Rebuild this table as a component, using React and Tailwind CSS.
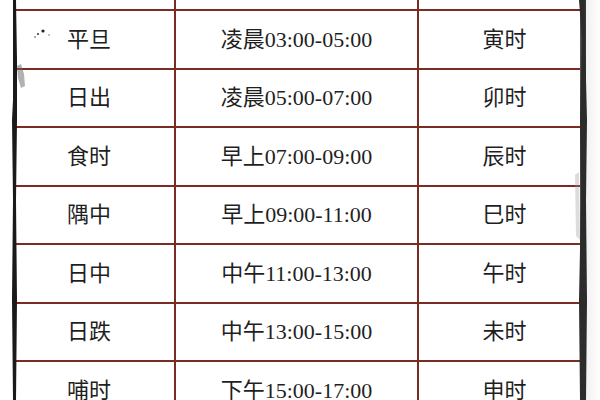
const ROWS = [
  ['平旦', '凌晨03:00-05:00', '寅时'],
  ['日出', '凌晨05:00-07:00', '卯时'],
  ['食时', '早上07:00-09:00', '辰时'],
  ['隅中', '早上09:00-11:00', '巳时'],
  ['日中', '中午11:00-13:00', '午时'],
  ['日跌', '中午13:00-15:00', '未时'],
  ['哺时', '下午15:00-17:00', '申时'],
];

function Row({ row, className = 'h-[58.5px]' }) {
  return (
    <div className={`grid grid-cols-[160px_243px_1fr] shrink-0 border-b-2 border-[#7a2c22] ${className}`}>
      <div className="flex items-center justify-center pr-[12px] border-r-2 border-[#7a2c22]">{row[0]}</div>
      <div className="flex items-center justify-center border-r-2 border-[#7a2c22]">{row[1]}</div>
      <div className="flex items-center justify-center pl-[10px]">{row[2]}</div>
    </div>
  );
}

export default function App() {
  return (
    <div
      className="relative w-[600px] h-[400px] overflow-hidden bg-white flex text-[22px] text-[#1f1f1f]"
      style={{ fontFamily: '"Liberation Serif", "Noto Sans CJK SC", serif' }}
    >
      <div className="w-[13px] shrink-0 bg-white" />
      <div className="w-[3px] shrink-0 bg-[#1a1a1a]" />

      <div className="w-[564px] shrink-0 flex flex-col">
        <Row row={['', '', '']} className="h-[11px]" />
        {ROWS.map((r) => (
          <Row key={r[0]} row={r} />
        ))}
      </div>

      <div className="w-[6px] shrink-0 bg-gradient-to-r from-[#5a5a5a] via-[#2a2a2a] to-[#3a3a3a]" />
      <div className="flex-1 bg-gradient-to-r from-[#f0f0f0] to-white" />

      {/* grunge marks on the paper edges */}
      <svg className="absolute left-0 top-0 pointer-events-none" width="600" height="400">
        <circle cx="43" cy="31" r="1.6" fill="#222" />
        <circle cx="38" cy="34" r="1" fill="#333" />
        <circle cx="35" cy="37" r="0.8" fill="#444" />
        <circle cx="49" cy="35" r="0.8" fill="#777" />
        <path d="M17 66 L21 64 L24 74 L25 86 L21 88 L18 78 Z" fill="#666" opacity="0.5" />
        <path d="M16 0 L14 8 L16 30 L15 60 L12 120 L13 200 L12 300 L13 400 L16 400 L17 300 L16 200 L17 120 L17 60 Z" fill="#1a1a1a" />
        <path d="M579 0 L582 40 L580 120 L581 200 L579 300 L580 400 L586 400 L587 300 L586 200 L587 120 L585 40 L584 0 Z" fill="#2b2b2b" />
        <path d="M575 175 L579 172 L580 240 L576 236 Z" fill="#9a9a9a" opacity="0.35" />
      </svg>
    </div>
  );
}
